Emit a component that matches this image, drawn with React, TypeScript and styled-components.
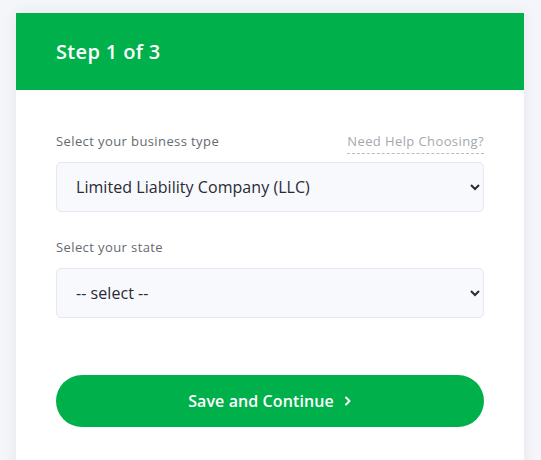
import React from 'react';
import styled, { createGlobalStyle } from 'styled-components';

const GlobalStyle = createGlobalStyle`
  body {
    margin: 0;
    background: #f5f6f9;
    font-family: 'Open Sans', 'Noto Sans', sans-serif;
  }
`;

const Page = styled.div`
  padding: 13px 17px 0 16px;
`;

const Card = styled.div`
  background: #ffffff;
  box-shadow: 0 0 14px rgba(30, 40, 60, 0.08);
  min-height: 460px;
`;

const Header = styled.div`
  background: #00b04b;
  height: 77px;
  display: flex;
  align-items: center;
  padding: 0 40px;
  color: #ffffff;
  font-size: 20px;
  font-weight: 600;
  letter-spacing: 0.35px;
`;

const Body = styled.form`
  padding: 42px 40px 0;
  display: flex;
  flex-direction: column;
`;

const Field = styled.div`
  display: flex;
  flex-direction: column;
  margin-bottom: 26px;
`;

const LabelRow = styled.div`
  display: flex;
  justify-content: space-between;
  align-items: flex-start;
  height: 22px;
  margin-bottom: 8px;
`;

const Label = styled.label`
  font-size: 13px;
  line-height: 18px;
  letter-spacing: 0.4px;
  color: #666a70;
`;

const HelpLink = styled.a`
  font-size: 13px;
  line-height: 18px;
  letter-spacing: 0.4px;
  color: #a4a8ae;
  text-decoration: none;
  border-bottom: 1px dashed #b8bcc2;
  padding-bottom: 3px;
  cursor: pointer;
`;

const Select = styled.select`
  height: 50px;
  width: 100%;
  background: #f8f9fd;
  border: 1px solid #e6e8ef;
  border-radius: 5px;
  padding: 0 12px 0 15px;
  font-family: 'Open Sans', 'Noto Sans', sans-serif;
  font-size: 16px;
  letter-spacing: 0.05px;
  color: #2a2a35;
  outline: none;
`;

const SubmitButton = styled.button<{ $top: number }>`
  margin-top: ${(p) => p.$top}px;
  height: 52px;
  border: none;
  border-radius: 26px;
  background: #00b04b;
  color: #ffffff;
  font-family: 'Open Sans', 'Noto Sans', sans-serif;
  font-size: 16px;
  font-weight: 600;
  letter-spacing: 0.1px;
  display: flex;
  align-items: center;
  justify-content: center;
  gap: 10px;
  cursor: pointer;
`;

const Chevron = () => (
  <svg width="8" height="10" viewBox="0 0 8 10" fill="none">
    <path d="M2 1.5 L5.5 5 L2 8.5" stroke="#fff" strokeWidth="2" strokeLinecap="round" strokeLinejoin="round" />
  </svg>
);

export default function App() {
  return (
    <>
      <GlobalStyle />
      <Page>
        <Card>
          <Header>Step 1 of 3</Header>
          <Body onSubmit={(e) => e.preventDefault()}>
            <Field>
              <LabelRow>
                <Label>Select your business type</Label>
                <HelpLink>Need Help Choosing?</HelpLink>
              </LabelRow>
              <Select defaultValue="llc">
                <option value="llc">Limited Liability Company (LLC)</option>
                <option value="corp">Corporation</option>
                <option value="nonprofit">Nonprofit</option>
              </Select>
            </Field>
            <Field>
              <LabelRow>
                <Label>Select your state</Label>
              </LabelRow>
              <Select defaultValue="">
                <option value="">-- select --</option>
                <option value="ca">California</option>
                <option value="ny">New York</option>
              </Select>
            </Field>
            <SubmitButton type="submit" $top={31}>
              Save and Continue <Chevron />
            </SubmitButton>
          </Body>
        </Card>
      </Page>
    </>
  );
}
